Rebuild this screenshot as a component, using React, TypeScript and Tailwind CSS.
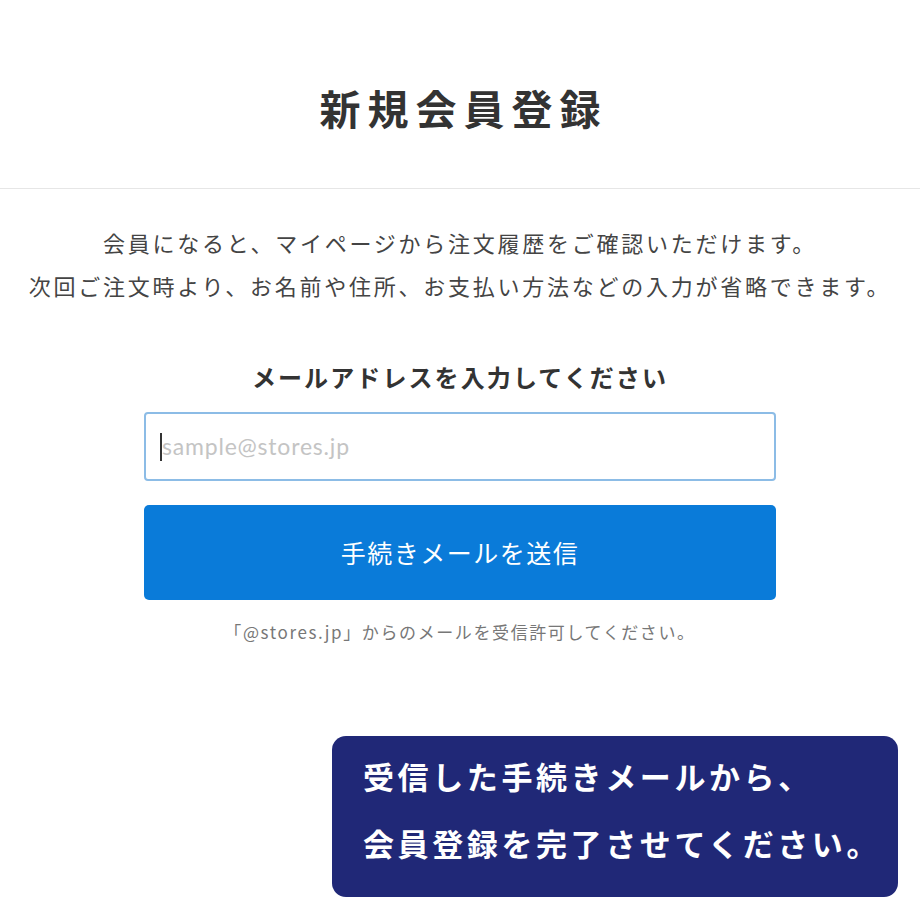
export default function App() {
  const jp = { fontFamily: '"Noto Sans CJK JP", "Noto Sans", sans-serif' };

  return (
    <div className="w-[920px] h-[920px] bg-white text-[#333]" style={jp}>
      {/* Header */}
      <header className="h-[189px] flex items-center justify-center pt-[27px] border-b border-[#e6e6e6]">
        <h1 className="text-[41px] font-bold tracking-[7px] leading-none text-[#333] pl-[7px]">
          新規会員登録
        </h1>
      </header>

      {/* Intro */}
      <div className="mt-[32px] text-center text-[22px] leading-[43px] tracking-[2.75px] text-[#444]">
        <p>会員になると、マイページから注文履歴をご確認いただけます。</p>
        <p>次回ご注文時より、お名前や住所、お支払い方法などの入力が省略できます。</p>
      </div>

      {/* Form */}
      <div className="mx-[144px] mt-[52px]">
        <p className="text-center text-[24px] font-bold leading-[36px] tracking-[2.1px] text-[#333]">
          メールアドレスを入力してください
        </p>

        <div className="mt-[17px] h-[69px] rounded-[4px] border-2 border-[#8cbce6] flex items-center px-[14px]">
          <span className="w-[2px] h-[28px] bg-[#333]" />
          <span
            className="text-[23px] text-[#c4c4c4] tracking-[0.8px]"
            style={{ fontFamily: 'Lato, "Open Sans", sans-serif' }}
          >
            sample@stores.jp
          </span>
        </div>

        <button className="mt-[24px] w-full h-[95px] rounded-[5px] bg-[#0a7bd9] text-white text-[25px] tracking-[1.5px]">
          手続きメールを送信
        </button>

        <p className="mt-[20px] text-center text-[17px] leading-[24px] tracking-[1.6px] text-[#777]">
          「@stores.jp」からのメールを受信許可してください。
        </p>
      </div>

      {/* Callout */}
      <div className="mt-[92px] flex justify-end pr-[22px]">
        <div className="w-[566px] h-[161px] rounded-[14px] bg-[#202877] pl-[31px] pt-[6px] text-white font-bold text-[31px] leading-[67px] tracking-[3.6px]">
          <p>受信した手続きメールから、</p>
          <p>会員登録を完了させてください。</p>
        </div>
      </div>
    </div>
  );
}
